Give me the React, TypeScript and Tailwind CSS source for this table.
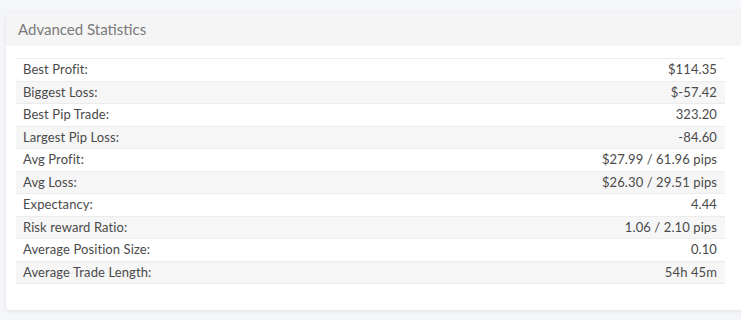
const rows: [string, string][] = [
  ['Best Profit:', '$114.35'],
  ['Biggest Loss:', '$-57.42'],
  ['Best Pip Trade:', '323.20'],
  ['Largest Pip Loss:', '-84.60'],
  ['Avg Profit:', '$27.99 / 61.96 pips'],
  ['Avg Loss:', '$26.30 / 29.51 pips'],
  ['Expectancy:', '4.44'],
  ['Risk reward Ratio:', '1.06 / 2.10 pips'],
  ['Average Position Size:', '0.10'],
  ['Average Trade Length:', '54h 45m'],
]

export default function App() {
  return (
    <div className="w-[741px] h-[320px] overflow-hidden bg-[#f4f6f9] pt-3 pl-1.5 font-['Lato','Noto_Sans',sans-serif]">
      <div className="w-[760px] bg-white rounded-[4px] shadow-[0_1px_4px_rgba(0,0,0,0.08)] overflow-hidden">
        <div className="h-[34px] flex items-center px-3 bg-[#f5f5f5] text-[15px] text-[#7a7a7a]">
          Advanced Statistics
        </div>
        <div className="pt-3 pb-[26px] pl-2.5 pr-[41px]">
          <div className="border-b border-[#ececec]">
            {rows.map(([label, value], i) => (
              <div
                key={label}
                className={`h-[22.5px] flex items-center justify-between pl-[7px] pr-[8px] border-t border-[#ececec] text-[13px] tracking-[0.1px] text-[#4a4a4a] ${i % 2 === 1 ? 'bg-[#f6f6f6]' : 'bg-white'}`}
              >
                <span>{label}</span>
                <span>{value}</span>
              </div>
            ))}
          </div>
        </div>
      </div>
    </div>
  )
}
